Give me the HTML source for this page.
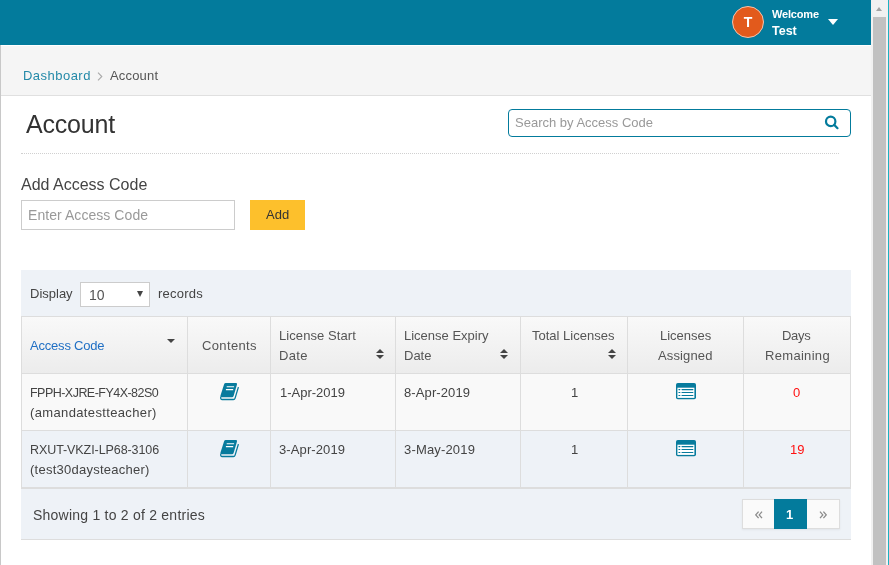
<!DOCTYPE html>
<html><head><meta charset="utf-8">
<style>
*{box-sizing:border-box;margin:0;padding:0}
html,body{width:889px;height:565px;overflow:hidden;background:#fff}
body{font-family:"Liberation Sans",sans-serif;color:#444;position:relative}
.a{position:absolute;white-space:nowrap;line-height:1}
.t{position:absolute;white-space:nowrap;line-height:20px;height:20px;font-size:13px;color:#444}
.h{color:#555}
.vb{position:absolute;width:1px;background:#ddd;top:316px;height:173px}
#w{position:absolute;left:0;top:0;width:889px;height:565px;will-change:transform}
</style></head><body><div id="w">
<!-- header -->
<div class="a" style="left:0;top:0;width:871px;height:45px;background:#037b9c"></div>
<div class="a" style="left:732px;top:6px;width:32px;height:32px;border-radius:50%;background:#e25a1c;border:1px solid #f3c4ad"></div>
<div class="a" id="avT" style="left:743px;top:15px;font-size:14px;font-weight:bold;color:#fff;width:10px;text-align:center">T</div>
<div class="a" id="wel" style="left:772px;top:9px;font-size:11px;font-weight:bold;color:#fff;letter-spacing:-0.18px">Welcome</div>
<div class="a" id="tst" style="left:772px;top:25px;font-size:12.5px;font-weight:bold;color:#fff">Test</div>
<div class="a" style="left:828px;top:19px;width:0;height:0;border-left:5px solid transparent;border-right:5px solid transparent;border-top:6px solid #fff"></div>
<!-- scrollbar -->
<div class="a" style="left:871px;top:0;width:17px;height:565px;background:#f1f1f1"></div>
<div class="a" style="left:873px;top:17px;width:13px;height:548px;background:#c1c1c1"></div>
<div class="a" style="left:876px;top:7px;width:0;height:0;border-left:3.5px solid transparent;border-right:3.5px solid transparent;border-bottom:4px solid #a3a3a3"></div>
<div class="a" style="left:888px;top:0;width:1px;height:565px;background:#1ab2c2"></div>
<!-- left border -->
<div class="a" style="left:0;top:45px;width:1px;height:520px;background:#c8c8c8"></div>
<!-- breadcrumb -->
<div class="a" style="left:1px;top:46px;width:870px;height:49px;background:#f5f5f5"></div>
<div class="a" style="left:1px;top:95px;width:870px;height:1px;background:#e0e0e0"></div>
<div class="a" id="bc1" style="left:23px;top:68px;font-size:13px;line-height:15px;color:#2389a8;letter-spacing:0.47px">Dashboard</div>
<svg class="a" style="left:97px;top:71.5px" width="6" height="9" viewBox="0 0 6 9"><path d="M1 0.7 L4.8 4.5 L1 8.3" fill="none" stroke="#aaa" stroke-width="1.1"/></svg>
<div class="a" id="bc2" style="left:110px;top:68px;font-size:13px;line-height:15px;color:#555;letter-spacing:0.17px">Account</div>
<!-- heading -->
<div class="a" id="hd" style="left:26px;top:110px;font-size:25px;line-height:28px;color:#333;letter-spacing:-0.21px">Account</div>
<div class="a" style="left:21px;top:153px;width:818px;height:0;border-top:1px dotted #d0d0d0"></div>
<!-- search -->
<div class="a" style="left:508px;top:109px;width:343px;height:28px;border:1px solid #037b9c;border-radius:4px;background:#fff"></div>
<div class="a" id="sp" style="left:515px;top:115px;font-size:13px;line-height:15px;color:#999">Search by Access Code</div>
<svg class="a" style="left:824px;top:115px" width="16" height="16" viewBox="0 0 16 16"><circle cx="6.7" cy="6.4" r="4.7" fill="none" stroke="#037b9c" stroke-width="2.2"/><path d="M10.2 9.9 L13.5 13.2" stroke="#037b9c" stroke-width="2.2" stroke-linecap="round"/></svg>
<!-- add access code -->
<div class="a" id="aac" style="left:21px;top:176px;font-size:16px;line-height:18px;color:#444">Add Access Code</div>
<div class="a" style="left:21px;top:200px;width:214px;height:30px;border:1px solid #ccc;background:#fff"></div>
<div class="a" id="eac" style="left:28px;top:207px;font-size:14px;line-height:16px;color:#999;letter-spacing:0.06px">Enter Access Code</div>
<div class="a" style="left:250px;top:200px;width:55px;height:30px;background:#fdc02c"></div>
<div class="a" id="addb" style="left:266px;top:207px;font-size:13px;line-height:15px;color:#333">Add</div>
<!-- table wrapper -->
<div class="a" style="left:21px;top:270px;width:830px;height:269px;background:#eef2f7"></div>
<div class="a" style="left:21px;top:539px;width:830px;height:1px;background:#ddd"></div>
<div class="t" id="dsp" style="left:30px;top:284px">Display</div>
<div class="a" style="left:80px;top:282px;width:70px;height:25px;border:1px solid #ccc;background:#fff"></div>
<div class="a" id="ten" style="left:89px;top:287px;font-size:14px;line-height:16px;color:#555">10</div>
<div class="a" style="left:137px;top:291px;width:0;height:0;border-left:3px solid transparent;border-right:3px solid transparent;border-top:6px solid #444"></div>
<div class="t" id="rec" style="left:158px;top:284px;letter-spacing:0.25px">records</div>
<!-- table header -->
<div class="a" style="left:21px;top:316px;width:830px;height:58px;background:linear-gradient(#f9f9f9,#ececec);border-top:1px solid #ddd;border-bottom:1px solid #ddd"></div>
<div class="a" style="left:21px;top:374px;width:830px;height:56px;background:#f9f9f9"></div>
<div class="a" style="left:21px;top:430px;width:830px;height:1px;background:#ddd"></div>
<div class="a" style="left:21px;top:487px;width:830px;height:2px;background:#ddd"></div>
<div class="vb" style="left:21px"></div><div class="vb" style="left:187px"></div><div class="vb" style="left:270px"></div><div class="vb" style="left:395px"></div><div class="vb" style="left:520px"></div><div class="vb" style="left:627px"></div><div class="vb" style="left:743px"></div><div class="vb" style="left:850px"></div>
<!-- header texts -->
<div class="t" id="h1" style="left:30px;top:336px;color:#1f6fc4;letter-spacing:-0.20px">Access Code</div>
<div class="a" style="left:167px;top:339px;width:0;height:0;border-left:4px solid transparent;border-right:4px solid transparent;border-top:4px solid #444"></div>
<div class="t h" id="h2" style="left:202px;top:336px;letter-spacing:0.36px">Contents</div>
<div class="t h" id="h3a" style="left:279px;top:326px;letter-spacing:0.08px">License Start</div>
<div class="t h" id="h3b" style="left:279px;top:346px;letter-spacing:0.33px">Date</div>
<div class="t h" id="h4a" style="left:404px;top:326px">License Expiry</div>
<div class="t h" id="h4b" style="left:404px;top:346px">Date</div>
<div class="t h" id="h5" style="left:532px;top:326px">Total Licenses</div>
<div class="t h" id="h6a" style="left:660px;top:326px">Licenses</div>
<div class="t h" id="h6b" style="left:658px;top:346px;letter-spacing:0.14px">Assigned</div>
<div class="t h" id="h7a" style="left:782px;top:326px;letter-spacing:-0.33px">Days</div>
<div class="t h" id="h7b" style="left:765px;top:346px;letter-spacing:0.31px">Remaining</div>
<!-- sort icons -->
<svg class="a" style="left:375.5px;top:349px" width="8" height="10" viewBox="0 0 8 10"><path d="M0 4.1 L4 0 L8 4.1Z M0 6 L8 6 L4 10Z" fill="#444"/></svg>
<svg class="a" style="left:500px;top:349px" width="8" height="10" viewBox="0 0 8 10"><path d="M0 4.1 L4 0 L8 4.1Z M0 6 L8 6 L4 10Z" fill="#444"/></svg>
<svg class="a" style="left:607.5px;top:349px" width="8" height="10" viewBox="0 0 8 10"><path d="M0 4.1 L4 0 L8 4.1Z M0 6 L8 6 L4 10Z" fill="#444"/></svg>
<!-- row 1 -->
<div class="t" id="r1a" style="font-size:12.5px;left:30px;top:383px;letter-spacing:-0.53px">FPPH-XJRE-FY4X-82S0</div>
<div class="t" id="r1b" style="left:30px;top:403px;letter-spacing:0.36px">(amandatestteacher)</div>
<div class="t" id="r1c" style="left:280px;top:383px">1-Apr-2019</div>
<div class="t" id="r1d" style="left:404px;top:383px;letter-spacing:0.11px">8-Apr-2019</div>
<div class="t" id="r1e" style="left:571px;top:383px">1</div>
<div class="t" id="r1f" style="left:793px;top:383px;color:#f11">0</div>
<!-- row 2 -->
<div class="t" id="r2a" style="font-size:12.5px;left:30px;top:440px;letter-spacing:-0.08px">RXUT-VKZI-LP68-3106</div>
<div class="t" id="r2b" style="left:30px;top:460px;letter-spacing:0.25px">(test30daysteacher)</div>
<div class="t" id="r2c" style="left:279px;top:440px;letter-spacing:0.11px">3-Apr-2019</div>
<div class="t" id="r2d" style="left:404px;top:440px;letter-spacing:0.17px">3-May-2019</div>
<div class="t" id="r2e" style="left:571px;top:440px">1</div>
<div class="t" id="r2f" style="left:790px;top:440px;color:#f11">19</div>
<!-- icons -->
<svg class="a bk" style="left:220px;top:382px" width="20" height="19" viewBox="0 0 20 19"><path d="M5.7 1 H15.9 Q17.4 1 17 2.4 L13.6 14 Q13.2 15.2 12 15.2 H0.5 Q0.2 14.5 0.5 13.6 L4.1 2.2 Q4.5 1 5.7 1Z" fill="#077b9d"/><path d="M0.7 15.2 Q0.4 17.5 2.2 17.5 H13.4 Q14.7 17.5 15.1 16.1 L18.4 5.1" fill="none" stroke="#077b9d" stroke-width="1.3"/><path d="M6.7 4.75 H14.1 M5.9 7.65 H13.2" stroke="#fff" stroke-width="1.1"/></svg>
<svg class="a bk" style="left:220px;top:439px" width="20" height="19" viewBox="0 0 20 19"><path d="M5.7 1 H15.9 Q17.4 1 17 2.4 L13.6 14 Q13.2 15.2 12 15.2 H0.5 Q0.2 14.5 0.5 13.6 L4.1 2.2 Q4.5 1 5.7 1Z" fill="#077b9d"/><path d="M0.7 15.2 Q0.4 17.5 2.2 17.5 H13.4 Q14.7 17.5 15.1 16.1 L18.4 5.1" fill="none" stroke="#077b9d" stroke-width="1.3"/><path d="M6.7 4.75 H14.1 M5.9 7.65 H13.2" stroke="#fff" stroke-width="1.1"/></svg>
<svg class="a" style="left:676px;top:383px" width="20" height="17" viewBox="0 0 20 17"><rect x="0" y="0" width="20" height="16.2" rx="1.8" fill="#077b9d"/><rect x="1.4" y="4.7" width="17" height="10.2" fill="#fff"/><path d="M2.9 6.6 H3.9 M2.9 9.5 H3.9 M2.9 12.5 H3.9 M6 6.6 H16.9 M6 9.5 H16.9 M6 12.5 H16.9" stroke="#077b9d" stroke-width="1.1" stroke-linecap="round"/></svg>
<svg class="a" style="left:676px;top:440px" width="20" height="17" viewBox="0 0 20 17"><rect x="0" y="0" width="20" height="16.2" rx="1.8" fill="#077b9d"/><rect x="1.4" y="4.7" width="17" height="10.2" fill="#fff"/><path d="M2.9 6.6 H3.9 M2.9 9.5 H3.9 M2.9 12.5 H3.9 M6 6.6 H16.9 M6 9.5 H16.9 M6 12.5 H16.9" stroke="#077b9d" stroke-width="1.1" stroke-linecap="round"/></svg>
<!-- footer -->
<div class="a" id="shw" style="left:33px;top:507px;font-size:14px;line-height:16px;color:#444;letter-spacing:0.23px">Showing 1 to 2 of 2 entries</div>
<div class="a" style="left:742px;top:499px;width:98px;height:30px;background:#fafafa;border:1px solid #ddd;box-shadow:0 1px 2px rgba(0,0,0,.06)"></div>
<div class="a" style="left:774px;top:499px;width:33px;height:30px;background:#037b9c"></div>
<div class="a" id="pg1" style="left:786px;top:507px;font-size:13px;line-height:15px;font-weight:bold;color:#fff">1</div>
<svg class="a" style="left:755px;top:511px" width="8" height="8" viewBox="0 0 8 8"><path d="M3.6 0.6 L0.8 3.9 L3.6 7.2 M7 0.6 L4.2 3.9 L7 7.2" fill="none" stroke="#8c8c8c" stroke-width="1.3"/></svg>
<svg class="a" style="left:819px;top:511px" width="8" height="8" viewBox="0 0 8 8"><path d="M1 0.6 L3.8 3.9 L1 7.2 M4.4 0.6 L7.2 3.9 L4.4 7.2" fill="none" stroke="#8c8c8c" stroke-width="1.3"/></svg>
</div></body></html>
